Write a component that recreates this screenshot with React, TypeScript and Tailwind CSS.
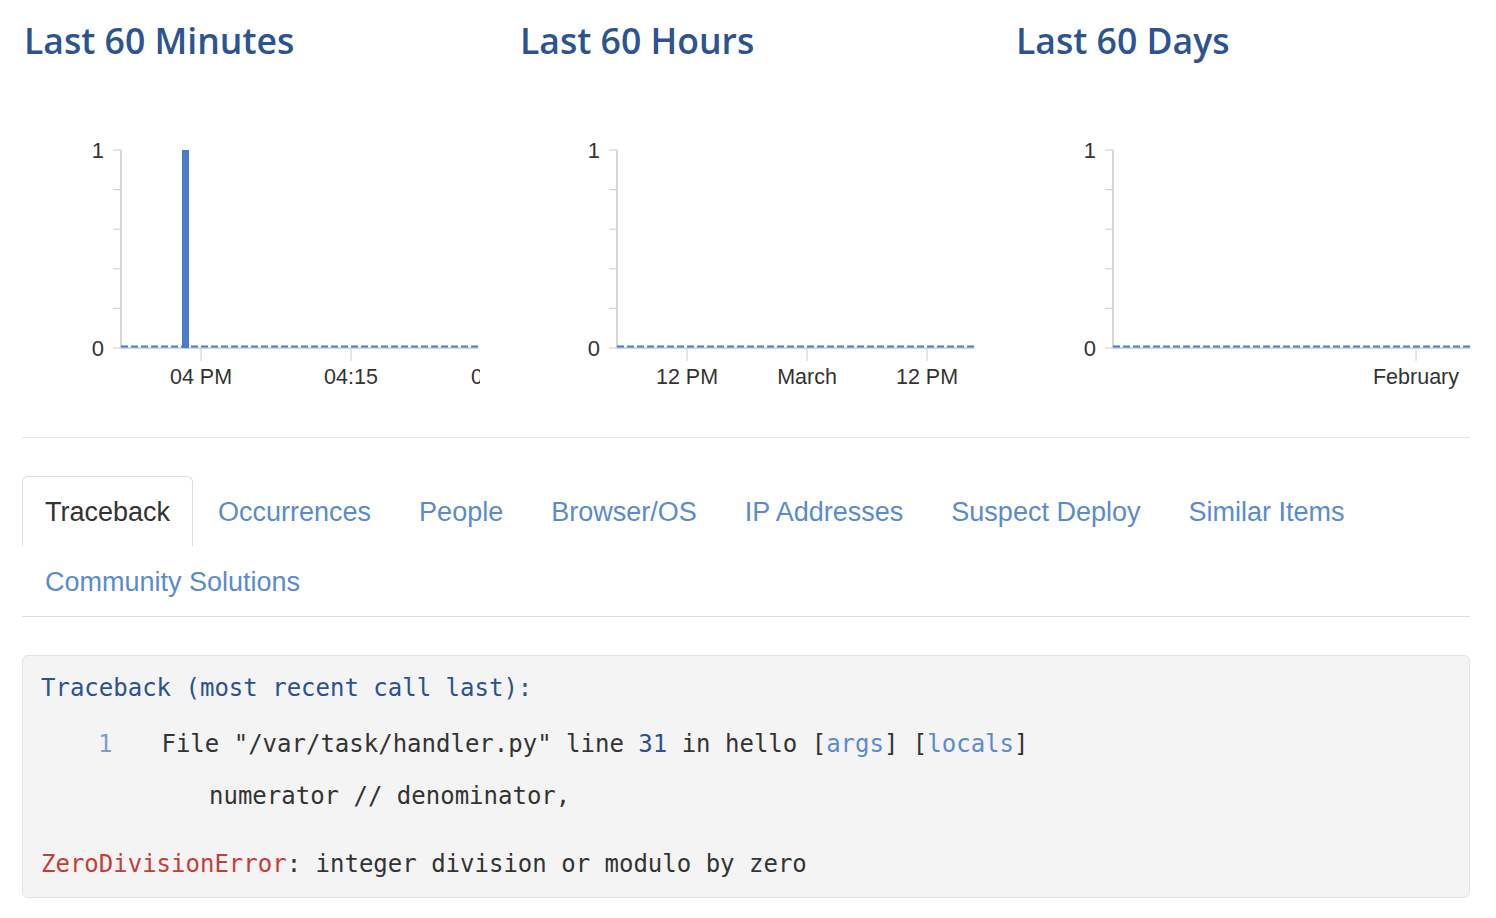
import React from "react";

type Tick = { x: number; label: string };

const AXIS_X = 99;
const AXIS_END = 456;
const TOP = 50;
const BOTTOM = 248;

function Chart({ ticks, bar }: { ticks: Tick[]; bar?: number }) {
	const ys = [0, 1, 2, 3, 4, 5].map((i) => TOP + ((BOTTOM - TOP) * i) / 5);
	return (
		<svg width={458} height={300} className="block" style={{ fontFamily: '"Liberation Sans", Arial, sans-serif' }}>
			{ys.map((y) => (
				<line key={y} x1={AXIS_X - 8} x2={AXIS_X} y1={y} y2={y} stroke="#cccccc" strokeWidth={1} />
			))}
			<line x1={AXIS_X} x2={AXIS_X} y1={TOP} y2={BOTTOM} stroke="#c8c8c8" strokeWidth={1.5} />
			<line x1={AXIS_X} x2={AXIS_END} y1={BOTTOM} y2={BOTTOM} stroke="#c8c8c8" strokeWidth={1.5} />
			<text x={82} y={TOP + 8} fontSize={22} fill="#333" textAnchor="end">1</text>
			<text x={82} y={BOTTOM + 8} fontSize={22} fill="#333" textAnchor="end">0</text>
			{ticks.map((t) => (
				<g key={t.x}>
					<line x1={t.x} x2={t.x} y1={BOTTOM} y2={BOTTOM + 13} stroke="#cccccc" strokeWidth={1} />
					<text x={t.x} y={284} fontSize={21.5} fill="#333" textAnchor="middle">{t.label}</text>
				</g>
			))}
			{bar !== undefined && <rect x={bar} y={TOP} width={7} height={BOTTOM - TOP} fill="#4a7dc6" />}
			<line x1={AXIS_X} x2={AXIS_END} y1={246.5} y2={246.5} stroke="#4a7dc6" strokeWidth={2} strokeDasharray="7 3" />
		</svg>
	);
}

const charts = [
	{ title: "Last 60 Minutes", bar: 160, ticks: [{ x: 179, label: "04 PM" }, { x: 329, label: "04:15" }, { x: 476, label: "04:30" }] },
	{ title: "Last 60 Hours", ticks: [{ x: 169, label: "12 PM" }, { x: 289, label: "March" }, { x: 409, label: "12 PM" }] },
	{ title: "Last 60 Days", ticks: [{ x: 402, label: "February" }] },
];

const tabs = ["Traceback", "Occurrences", "People", "Browser/OS", "IP Addresses", "Suspect Deploy", "Similar Items", "Community Solutions"];

export default function App() {
	return (
		<div className="min-h-[918px] bg-white pl-[22px] pr-[26px] pt-[18px]">
			<div className="grid grid-cols-[496px_496px_1fr]">
				{charts.map((c) => (
					<div key={c.title} className="min-w-0">
						<h2 className="pl-[2px] text-[35.6px] leading-[44px] font-semibold text-[#2c5492]" style={{ fontFamily: '"Open Sans", sans-serif' }}>
							{c.title}
						</h2>
						<div className="mt-[38px]">
							<Chart ticks={c.ticks} bar={c.bar} />
						</div>
					</div>
				))}
			</div>

			<div className="mt-[37px] border-t border-[#e6e6e6]"></div>

			<ul className="mt-[38px] flex flex-wrap border-b border-[#dddddd] text-[27px] leading-[32px]" style={{ fontFamily: '"Liberation Sans", Arial, sans-serif' }}>
				{tabs.map((t, i) => (
					<li
						key={t}
						className={
							i === 0
								? "mr-[2px] rounded-t-[6px] border border-b-0 border-[#dddddd] bg-white px-[22px] pt-[19px] pb-[18px] text-[#333333]"
								: "mr-[2px] border border-transparent px-[22px] pt-[19px] pb-[17px] text-[#5a8bcf]"
						}
					>
						{t}
					</li>
				))}
			</ul>

			<div
				className="mt-[38px] rounded-[6px] border border-[#e3e3e3] bg-[#f4f4f4] px-[18px] pt-[16px] pb-[17px] text-[24px] leading-[32px] text-[#333333]"
				style={{ fontFamily: '"DejaVu Sans Mono", "Liberation Mono", monospace' }}
			>
				<div className="text-[#2a5291]">Traceback (most recent call last):</div>
				<div className="mt-[24px] flex whitespace-pre">
					<span className="ml-[57px] text-[#7e9dcb]">1</span>
					<span className="ml-[49px]">
						File "/var/task/handler.py" line <span className="text-[#2a5291]">31</span> in hello [<span className="text-[#5a8bcf]">args</span>] [<span className="text-[#5a8bcf]">locals</span>]
					</span>
				</div>
				<div className="mt-[20px] pl-[168px] whitespace-pre">numerator // denominator,</div>
				<div className="mt-[36px] whitespace-pre">
					<span className="text-[#c93c36]">ZeroDivisionError</span>: integer division or modulo by zero
				</div>
			</div>
		</div>
	);
}
